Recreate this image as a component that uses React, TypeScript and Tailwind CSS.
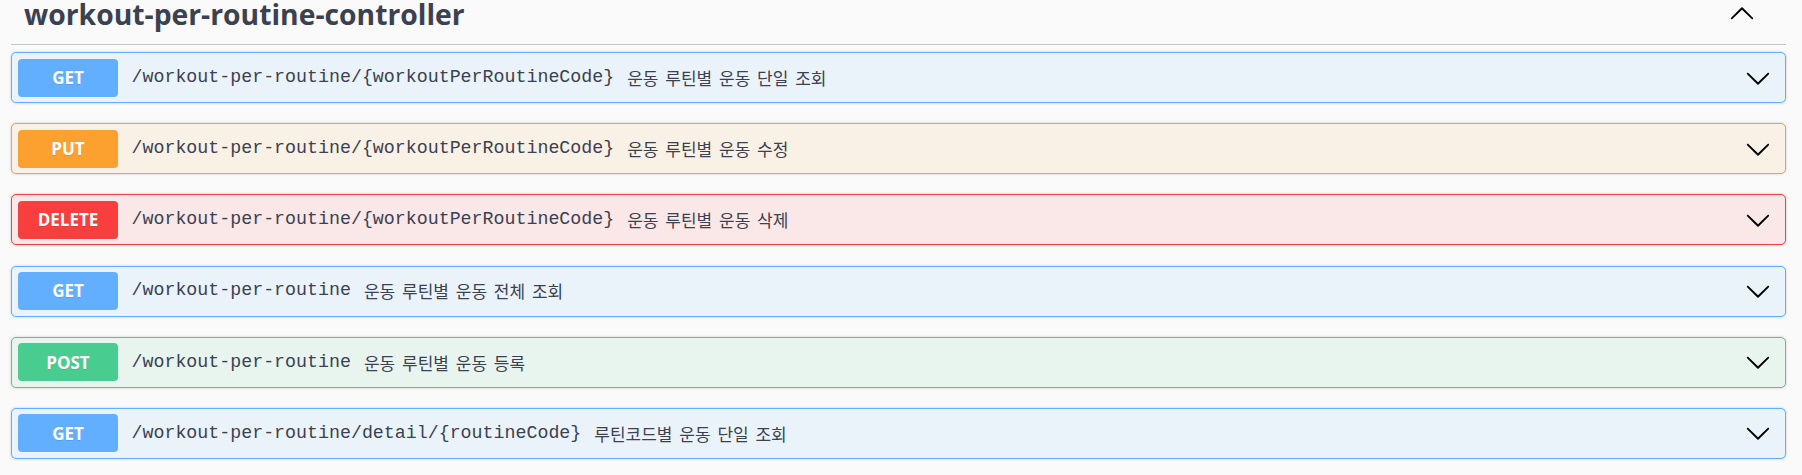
import React from "react";

type Op = {
  method: "GET" | "PUT" | "DELETE" | "POST";
  path: string;
  desc: string;
};

const ops: Op[] = [
  { method: "GET", path: "/workout-per-routine/{workoutPerRoutineCode}", desc: "운동 루틴별 운동 단일 조회" },
  { method: "PUT", path: "/workout-per-routine/{workoutPerRoutineCode}", desc: "운동 루틴별 운동 수정" },
  { method: "DELETE", path: "/workout-per-routine/{workoutPerRoutineCode}", desc: "운동 루틴별 운동 삭제" },
  { method: "GET", path: "/workout-per-routine", desc: "운동 루틴별 운동 전체 조회" },
  { method: "POST", path: "/workout-per-routine", desc: "운동 루틴별 운동 등록" },
  { method: "GET", path: "/workout-per-routine/detail/{routineCode}", desc: "루틴코드별 운동 단일 조회" },
];

const styles: Record<Op["method"], { row: string; badge: string }> = {
  GET: { row: "bg-[#ebf3fa] border-[#61affe]", badge: "bg-[#61affe]" },
  PUT: { row: "bg-[#faf1e6] border-[#fca130]", badge: "bg-[#fca130]" },
  DELETE: { row: "bg-[#fae7e7] border-[#f93e3e]", badge: "bg-[#f93e3e]" },
  POST: { row: "bg-[#e8f5ef] border-[#49cc90]", badge: "bg-[#49cc90]" },
};

const ArrowDown = () => (
  <svg width="26" height="26" viewBox="0 0 20 20" className="shrink-0">
    <path
      fill="#000"
      d="M17.418 6.109c.272-.268.709-.268.979 0s.271.701 0 .969l-7.908 7.83c-.27.268-.707.268-.979 0l-7.908-7.83c-.27-.268-.27-.701 0-.969.271-.268.709-.268.979 0L10 13.25l7.418-7.141z"
    />
  </svg>
);

const ArrowUp = () => (
  <svg width="26" height="26" viewBox="0 0 20 20" className="shrink-0">
    <path
      fill="#000"
      d="M2.582 13.891c-.272.268-.709.268-.979 0s-.271-.701 0-.969l7.908-7.83c.27-.268.707-.268.979 0l7.908 7.83c.27.268.27.701 0 .969-.271.268-.709.268-.979 0L10 6.75l-7.418 7.141z"
    />
  </svg>
);

export default function App() {
  return (
    <div className="min-h-[475px] w-[1802px] bg-[#fafafa] pl-[11px] pr-[16px]">
      <div className="flex h-[45px] items-start justify-between border-b border-[#c4c6cb]">
        <h3 className="ml-[13px] font-['Open_Sans',sans-serif] text-[28.3px] font-bold leading-[28px] text-[#3b4151]">
          workout-per-routine-controller
        </h3>
        <div className="mr-[31px] mt-[1px]">
          <ArrowUp />
        </div>
      </div>
      <div className="mt-[7px] flex flex-col gap-[20.2px]">
        {ops.map((op, i) => (
          <div
            key={i}
            className={`flex h-[51px] items-center rounded-[5px] border px-[6px] shadow-[0_0_3px_rgba(0,0,0,0.19)] ${styles[op.method].row}`}
          >
            <div
              className={`flex h-[38px] w-[100px] shrink-0 items-center justify-center rounded-[4px] font-['Open_Sans',sans-serif] text-[17px] font-bold text-white [text-shadow:0_1px_0_rgba(0,0,0,0.1)] ${styles[op.method].badge}`}
            >
              {op.method}
            </div>
            <span className="ml-[13.5px] font-['Liberation_Mono',monospace] text-[18.3px] text-[#3b4151]">
              {op.path}
            </span>
            <span className="ml-[13px] flex-1 font-['Noto_Sans_CJK_KR',sans-serif] text-[17px] text-[#3b4151] [word-spacing:3px]">
              {op.desc}
            </span>
            <div className="mr-[8px]">
              <ArrowDown />
            </div>
          </div>
        ))}
      </div>
    </div>
  );
}
